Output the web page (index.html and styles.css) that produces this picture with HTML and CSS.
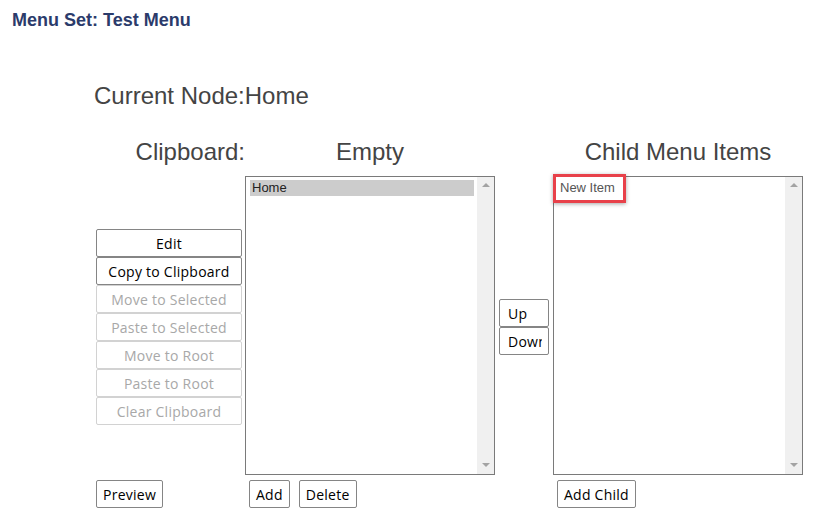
FILE: index.html
```html
<!DOCTYPE html>
<html>
<head>
<meta charset="utf-8">
<title>Menu Set: Test Menu</title>
<link rel="stylesheet" href="styles.css">
</head>
<body>
<h1 class="title">Menu Set: Test Menu</h1>
<div class="editor">
  <h2 class="current">Current Node:Home</h2>
  <div class="grid">
    <div class="hd hd-clip">Clipboard:</div>
    <div class="hd">Empty</div>
    <div class="hd"></div>
    <div class="hd">Child Menu Items</div>

    <div class="actions">
      <button class="btn btn-block">Edit</button>
      <button class="btn btn-block">Copy to Clipboard</button>
      <button class="btn btn-block" disabled>Move to Selected</button>
      <button class="btn btn-block" disabled>Paste to Selected</button>
      <button class="btn btn-block" disabled>Move to Root</button>
      <button class="btn btn-block" disabled>Paste to Root</button>
      <button class="btn btn-block" disabled>Clear Clipboard</button>
    </div>

    <div class="listbox">
      <div class="items">
        <div class="item selected">Home</div>
      </div>
      <div class="scrollbar"><span class="arrow up"></span><span class="arrow down"></span></div>
    </div>

    <div class="updown">
      <button class="btn btn-small"><span class="clip">Up</span></button>
      <button class="btn btn-small"><span class="clip">Down</span></button>
    </div>

    <div class="listbox">
      <div class="items">
        <div class="item muted">New Item</div>
      </div>
      <div class="scrollbar"><span class="arrow up"></span><span class="arrow down"></span></div>
      <div class="highlight"></div>
    </div>

    <div class="foot foot-left"><button class="btn">Preview</button></div>
    <div class="foot"><button class="btn">Add</button><button class="btn">Delete</button></div>
    <div class="foot"></div>
    <div class="foot"><button class="btn">Add Child</button></div>
  </div>
</div>
</body>
</html>
```

FILE: styles.css
```css
* { box-sizing: border-box; }

body {
  margin: 0;
  background: #ffffff;
  font-family: "Liberation Sans", Arial, sans-serif;
  color: #444444;
}

.title {
  margin: 0;
  padding: 10px 0 0 12px;
  font-size: 18px;
  line-height: 21px;
  font-weight: bold;
  color: #2b3b6b;
}

.editor {
  padding-left: 96px;
}

.current {
  margin: 51px 0 0 -2px;
  font-size: 24px;
  line-height: 28px;
  font-weight: normal;
  color: #444444;
}

.grid {
  margin-top: 28px;
  display: grid;
  grid-template-columns: 149px 250px 58px 250px;
}

.hd {
  height: 28px;
  margin-bottom: 10px;
  font-size: 24px;
  line-height: 28px;
  text-align: center;
  color: #444444;
}

.hd-clip {
  text-align: right;
}

.btn {
  height: 28px;
  margin: 0;
  padding: 0 6px;
  background: #ffffff;
  border: 1px solid #858585;
  border-radius: 2px;
  font-family: "Open Sans", "Noto Sans", sans-serif;
  font-size: 14px;
  letter-spacing: 0.25px;
  color: #000000;
  white-space: nowrap;
  overflow: hidden;
}

.btn:disabled {
  border-color: #d2d2d2;
  color: #a8a8a8;
}

.actions {
  align-self: center;
  margin-top: 3px;
  display: flex;
  flex-direction: column;
  width: 146px;
}

.btn-block {
  width: 146px;
}

.updown {
  align-self: center;
  margin-top: 3px;
  margin-left: 4px;
  display: flex;
  flex-direction: column;
}

.btn-small {
  width: 50px;
  padding: 0 0 0 8px;
  text-align: left;
}

.clip {
  display: block;
  width: 34px;
  overflow: hidden;
}

.listbox {
  position: relative;
  height: 299px;
  border: 1px solid #7a7a7a;
  display: flex;
}

.items {
  flex: 1;
  padding: 3px 3px 0 4px;
}

.item {
  height: 16px;
  padding-left: 2px;
  font-size: 13px;
  line-height: 16px;
  color: #222222;
}

.item.selected {
  background: #cccccc;
}

.item.muted {
  color: #555555;
}

.scrollbar {
  width: 17px;
  background: #f0f0f0;
  display: flex;
  flex-direction: column;
  justify-content: space-between;
  align-items: center;
  padding: 6px 0 7px;
}

.arrow {
  width: 0;
  height: 0;
  border-left: 4px solid transparent;
  border-right: 4px solid transparent;
}

.arrow.up {
  border-bottom: 4px solid #a3a3a3;
}

.arrow.down {
  border-top: 4px solid #a3a3a3;
}

.highlight {
  position: absolute;
  left: -1px;
  top: -3px;
  width: 73px;
  height: 29px;
  border: 3px solid #e8414a;
  box-shadow: 0 1px 4px rgba(0, 0, 0, 0.35);
}

.foot {
  margin-top: 5px;
  display: flex;
  gap: 9px;
  padding-left: 4px;
}

.foot-left {
  padding-left: 0;
}
```
